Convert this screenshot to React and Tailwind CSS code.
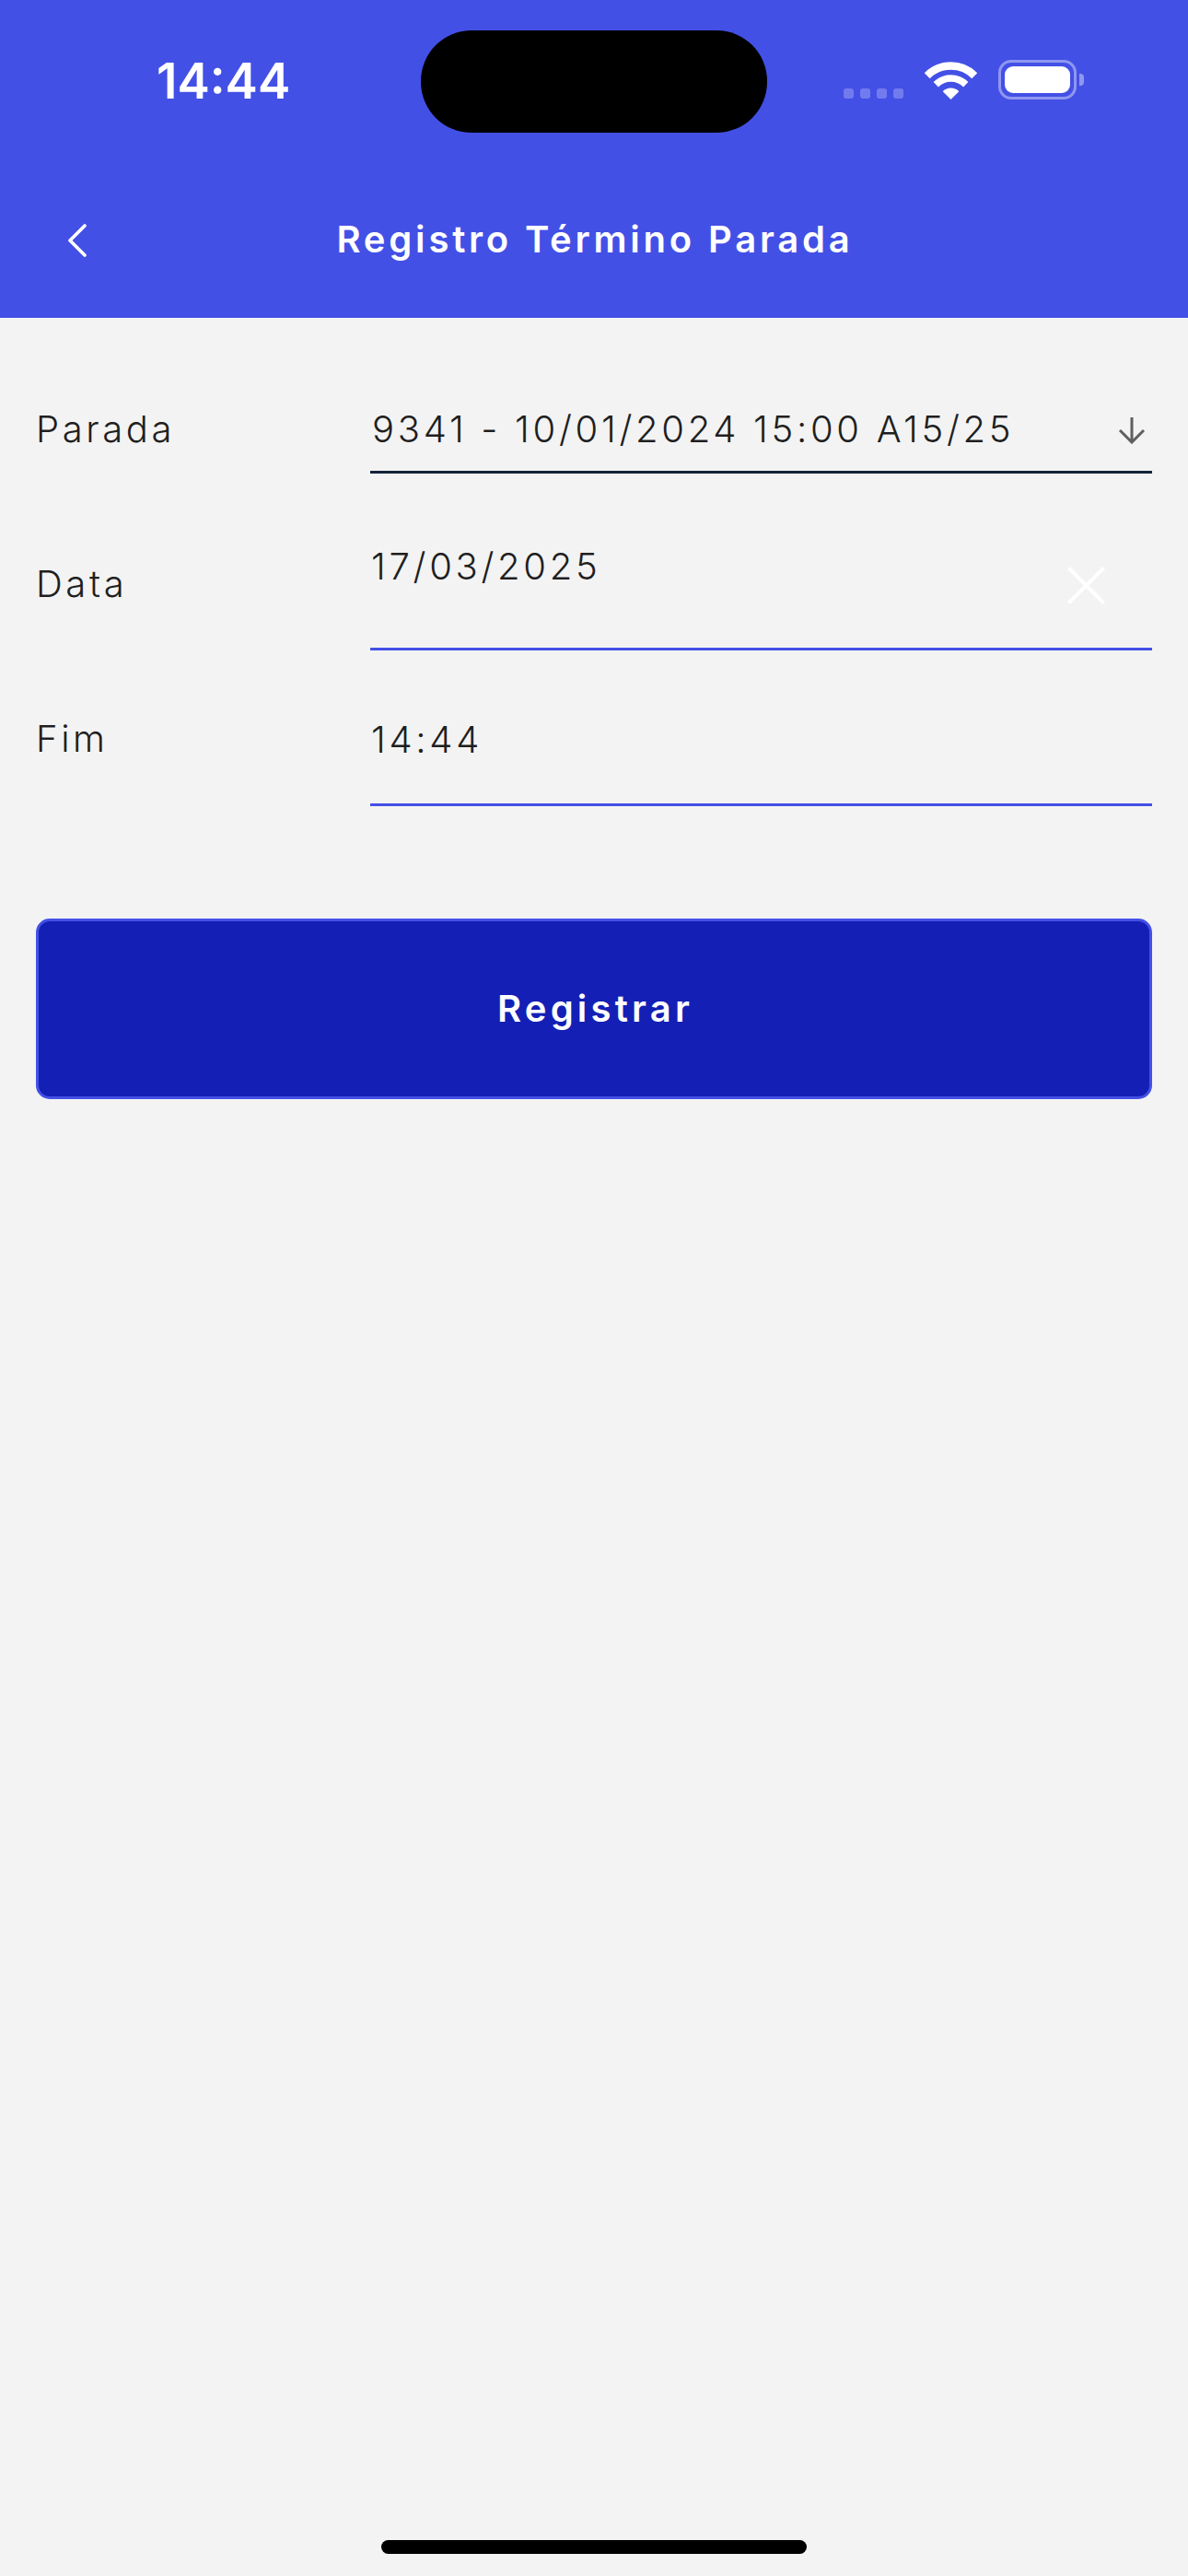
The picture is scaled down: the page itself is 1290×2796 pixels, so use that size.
const inter = "font-['Inter',sans-serif]";

function Wifi() {
  return (
    <svg width="57" height="41" viewBox="0 0 57 41" fill="none" className="mr-[23px] mt-px">
      <path d="M2.7 15.2A36.5 36.5 0 0 1 54.3 15.2" stroke="white" strokeWidth="8.5" />
      <path d="M12.24 24.74A23 23 0 0 1 44.76 24.74" stroke="white" strokeWidth="7.5" />
      <path d="M28.5 41L19.7 32.2A12.5 12.5 0 0 1 37.3 32.2Z" fill="white" />
    </svg>
  );
}

function Battery() {
  return (
    <div className="flex items-center">
      <div className="flex h-[43px] w-[85px] items-center justify-center rounded-[14px] border-[3px] border-[#8f97f0]">
        <div className="h-[29px] w-[71px] rounded-[9px] bg-white" />
      </div>
      <div className="ml-[3px] h-[13px] w-[5px] rounded-r-[4px] bg-[#8f97f0]" />
    </div>
  );
}

function StatusBar() {
  return (
    <div className="flex h-[178px] items-start pl-[170px] pt-[33px]">
      <div className={`${inter} mt-[25px] w-[287px] text-[53px] font-semibold leading-[60px] text-white`}>14:44</div>
      <div className="h-[111px] w-[376px] rounded-[55px] bg-black" />
      <div className="ml-[83px] mt-[32px] flex items-end">
        <div className="mb-px mr-[23px] flex gap-[7px]">
          <div className="h-[11px] w-[11px] rounded-[3px] bg-[#727bee]" />
          <div className="h-[11px] w-[11px] rounded-[3px] bg-[#727bee]" />
          <div className="h-[11px] w-[11px] rounded-[3px] bg-[#727bee]" />
          <div className="h-[11px] w-[11px] rounded-[3px] bg-[#727bee]" />
        </div>
        <Wifi />
        <Battery />
      </div>
    </div>
  );
}

function Field({ label, labelTop, value, valueTop, height, line, icon, pl }) {
  return (
    <div className={`flex ${height}`}>
      <div className={`w-[363px] ${labelTop} text-[40px] font-light leading-[48px] tracking-[3.6px] text-[#1f1f1f]`}>
        {label}
      </div>
      <div className={`flex flex-1 justify-between border-b-[3px] ${line} ${valueTop} ${pl} text-[40px] font-light leading-[48px] tracking-[3.7px] text-[#1f1f1f]`}>
        <span>{value}</span>
        {icon}
      </div>
    </div>
  );
}

export default function App() {
  return (
    <div className={`${inter} relative min-h-[2796px] bg-[#f3f3f3]`}>
      <header className="h-[345px] bg-[#4350e6]">
        <StatusBar />
        <div className="relative flex h-[167px] items-center justify-center pb-[3px]">
          <svg width="22" height="36" viewBox="0 0 22 36" fill="none" className="absolute left-[73px] top-[65px]">
            <path d="M19 2L3 18L19 34" stroke="white" strokeWidth="3.6" strokeLinecap="round" strokeLinejoin="round" />
          </svg>
          <h1 className="pl-[2px] text-[40px] font-semibold leading-[48px] tracking-[3.8px] text-white">Registro Término Parada</h1>
        </div>
      </header>

      <main className="px-[39px]">
        <Field
          label="Parada"
          labelTop="pt-[97px]"
          value="9341 - 10/01/2024 15:00 A15/25"
          valueTop="pt-[97px]"
          height="h-[169px]"
          line="border-[#14233a]"
          pl="pl-[2px] pr-[7px]"
          icon={
            <svg width="30" height="30" viewBox="0 0 30 30" fill="none" className="mt-[10px]">
              <path d="M15 1V28M2 15L15 28L28 15" stroke="#5f5f5f" strokeWidth="3" />
            </svg>
          }
        />
        <Field
          label="Data"
          labelTop="pt-[96px]"
          value="17/03/2025"
          valueTop="pt-[77px]"
          height="h-[192px]"
          line="border-[#4350e6]"
          pl="pl-[1px] pr-[51px]"
          icon={
            <svg width="41" height="41" viewBox="0 0 41 41" fill="none" className="mt-[24px]">
              <path d="M1.5 1.5L39.5 39.5M39.5 1.5L1.5 39.5" stroke="white" strokeWidth="4" />
            </svg>
          }
        />
        <Field
          label="Fim"
          labelTop="pt-[72px]"
          value="14:44"
          valueTop="pt-[73px]"
          height="h-[169px]"
          line="border-[#4350e6]"
          pl="pl-[1px]"
        />
        <button className="mt-[122px] flex h-[196px] w-full items-center justify-center rounded-[15px] border-[3px] border-[#4350e6] bg-[#1420b5] pl-[3px] text-[40px] font-semibold tracking-[4.2px] text-white">
          Registrar
        </button>
      </main>

      <div className="absolute bottom-[24px] left-[414px] h-[15px] w-[462px] rounded-full bg-black" />
    </div>
  );
}
